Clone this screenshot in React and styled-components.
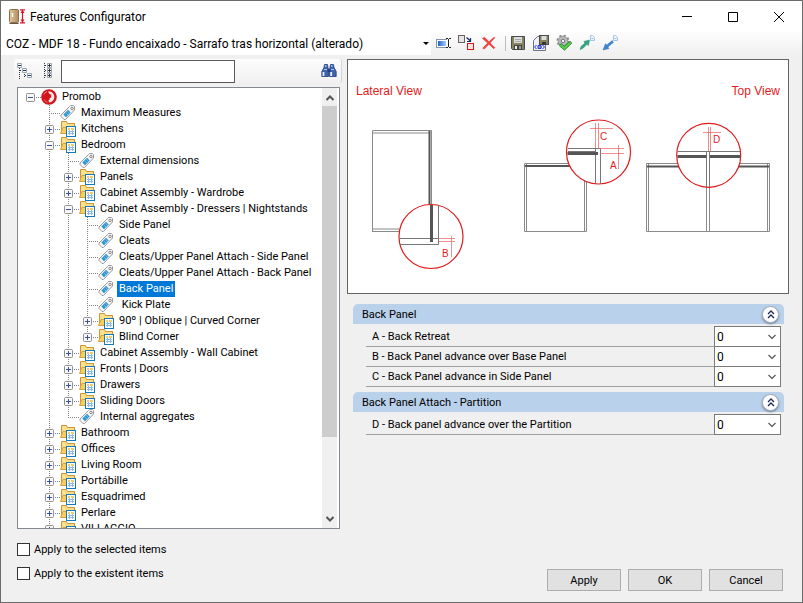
import React, { useState } from "react";
import styled, { createGlobalStyle, css } from "styled-components";

const GlobalStyle = createGlobalStyle`
  * {
    box-sizing: border-box;
  }
  body {
    margin: 0;
    background: #f0f0f0;
    color: #000;
    font-family: Roboto, "Liberation Sans", Arial, sans-serif;
    font-size: 11px;
  }
  button, input, select {
    font-family: inherit;
    font-size: inherit;
    color: inherit;
  }
  svg {
    display: block;
  }
`;

const Window = styled.div`
  display: flex;
  flex-direction: column;
  height: 100vh;
  min-height: 480px;
  border: 1px solid #6b6b6b;
  background: #f0f0f0;
`;

const TitleBar = styled.header`
  display: flex;
  align-items: center;
  height: 31px;
  padding-left: 8px;
  background: #fff;
`;

const Title = styled.h1`
  flex: 1;
  margin: 0 0 0 4px;
  font-size: 12px;
  font-weight: 400;
  line-height: 16px;
`;

const CaptionButton = styled.button`
  display: flex;
  align-items: center;
  justify-content: center;
  width: 46px;
  height: 29px;
  padding: 0;
  border: 0;
  background: none;
`;

const ToolBar = styled.div`
  display: flex;
  align-items: center;
  height: 23px;
  background: linear-gradient(#fdfdfd, #f0f0f0);
`;

const ModelCombo = styled.button`
  display: flex;
  align-items: center;
  flex: 0 0 430px;
  height: 23px;
  padding: 0 2px 0 5px;
  border: 0;
  background: #fff;
  font-size: 12px;
  text-align: left;
  white-space: nowrap;

  span {
    flex: 1;
  }
`;

const ToolButton = styled.button`
  width: 23px;
  height: 22px;
  padding: 0 0 1px 4px;
  border: 0;
  background: none;
`;

const Separator = styled.i`
  width: 1px;
  height: 15px;
  margin: 0 0 0 5px;
  background: #bdbdbd;
`;

const Main = styled.main`
  display: flex;
  flex: 1;
  gap: 5px;
  min-height: 0;
  padding: 4px 13px 0 13px;
`;

const Side = styled.section`
  display: flex;
  flex-direction: column;
  flex: 0 0 328px;
`;

const SearchBar = styled.div`
  display: flex;
  align-items: center;
  gap: 8px;
  height: 24px;
  padding: 0 4px 0 3px;
  border-right: 1px solid #d4d4d4;
  border-radius: 3px;
  background: linear-gradient(#fcfcfc, #f1f1f1);
`;

const SearchInput = styled.input`
  width: 174px;
  height: 23px;
  margin-right: auto;
  padding: 0 4px;
  border: 1px solid #5a5a5a;
  background: #fff;
`;

const IconButton = styled.button`
  padding: 0;
  border: 0;
  background: none;
`;

const TreeBox = styled.div`
  display: flex;
  flex: 1;
  min-height: 0;
  margin: 4px 2px 0 3px;
  border: 1px solid #828790;
  background: #fff;
`;

const TreeList = styled.ul`
  flex: 1;
  margin: 0;
  padding: 1px 0 0 3px;
  overflow: hidden;
  list-style: none;
`;

const TreeRow = styled.li`
  display: flex;
  align-items: center;
  height: 16px;
  white-space: pre;
`;

const dotsDown = "repeating-linear-gradient(#808080 0 1px, transparent 1px 2px)";
const dotsRight = "repeating-linear-gradient(90deg, #808080 0 1px, transparent 1px 2px)";

const Guide = styled.span`
  flex: none;
  width: 19px;
  height: 16px;
  ${({ $line }) =>
    $line &&
    css`
      background: ${dotsDown} 9px 0 / 1px 16px no-repeat;
    `}
`;

const Joint = styled.span`
  display: flex;
  flex: none;
  align-items: center;
  width: 20px;
  height: 16px;
  padding-left: 5px;
  background:
    ${dotsRight} 9px 8px / 11px 1px no-repeat,
    ${dotsDown} 9px 0 / 1px ${({ $down }) => $down}px no-repeat;
`;

const Expander = styled.button`
  width: 9px;
  height: 9px;
  padding: 0;
  border: 0;
  background: none;
`;

const ItemLabel = styled.button`
  height: 16px;
  margin-left: 3px;
  padding: 0 2px;
  border: 0;
  background: ${({ $selected }) => ($selected ? "#0078d7" : "none")};
  color: ${({ $selected }) => ($selected ? "#fff" : "#000")};
  line-height: 16px;
  white-space: pre;
`;

const ScrollBar = styled.div`
  display: flex;
  flex-direction: column;
  width: 17px;
  padding: 1px 2px 1px 0;
  background: linear-gradient(90deg, #f0f0f0 15px, #fff 15px);
`;

const ScrollArrow = styled.button`
  display: flex;
  align-items: center;
  justify-content: center;
  height: 17px;
  padding: 0;
  border: 0;
  background: none;
`;

const ScrollTrack = styled.div`
  flex: 1;

  div {
    height: 82%;
    background: #cdcdcd;
  }
`;

const Details = styled.section`
  flex: 1;
  min-width: 0;
`;

const Preview = styled.figure`
  margin: 0;
  border: 1px solid #646464;
  background: #fff;
  font-family: "Liberation Sans", Arial, sans-serif;
`;

const PreviewTitles = styled.figcaption`
  display: flex;
  justify-content: space-between;
  padding: 24px 8px 0;
  color: #e31b1b;
  font-size: 12px;
  line-height: 14px;
`;

const Groups = styled.div`
  display: flex;
  flex-direction: column;
  gap: 5px;
  padding: 10px 5px 0 6px;
`;

const GroupHeader = styled.h2`
  display: flex;
  align-items: center;
  justify-content: space-between;
  height: 20px;
  margin: 0 0 3px;
  padding: 0 5px 0 9px;
  border-radius: 5px 5px 0 0;
  background: #b9d1ea;
  font-size: 11px;
  font-weight: 400;
`;

const CollapseButton = styled.button`
  display: flex;
  align-items: center;
  justify-content: center;
  width: 17px;
  height: 17px;
  padding: 0;
  border: 1px solid #a3adbf;
  border-radius: 50%;
  background: #fff;
  box-shadow: 0 1px 2px #6f7b90;
`;

const Field = styled.div`
  display: flex;
  align-items: center;
  height: 21px;
  margin: -1px 3px 0 13px;
  border-bottom: 1px solid #a0a0a0;

  label {
    flex: 1;
    padding-left: 6px;
  }
`;

const SelectBox = styled.span`
  display: grid;
  align-items: center;
  width: 67px;
  height: 21px;
  margin-bottom: -1px;

  select {
    grid-area: 1 / 1;
    height: 21px;
    padding: 0 2px;
    appearance: none;
    border: 1px solid #7a7a7a;
    border-radius: 0;
    background: #fff;
    font-size: 12px;
  }
  svg {
    grid-area: 1 / 1;
    justify-self: end;
    margin-right: 4px;
    pointer-events: none;
  }
`;

const Footer = styled.footer`
  display: flex;
  align-items: flex-end;
  justify-content: space-between;
  padding: 8px 19px 11px 16px;
`;

const Checks = styled.div`
  margin-bottom: 6px;
`;

const Check = styled.label`
  display: flex;
  align-items: center;
  gap: 4px;
  height: 24px;

  input {
    width: 13px;
    height: 13px;
    margin: 0;
    appearance: none;
    border: 1px solid #333;
    background: #fff;
  }
  input:checked {
    box-shadow: inset 0 0 0 2px #fff;
    background: #333;
  }
`;

const Actions = styled.div`
  display: flex;
  gap: 7px;
`;

const ActionButton = styled.button`
  width: 74px;
  height: 22px;
  padding: 0;
  border: 1px solid #adadad;
  background: #e1e1e1;
`;

/* icons */

const AppIcon = () => (
  <svg width="17" height="16" viewBox="0 0 17 16">
    <defs>
      <linearGradient id="door" x2="1">
        <stop offset="0" stopColor="#e3c8a2" />
        <stop offset="1" stopColor="#b08c60" />
      </linearGradient>
    </defs>
    <rect x=".5" y=".5" width="9" height="13" rx="1" fill="url(#door)" stroke="#8d6e4b" />
    <path d="M.5 14.5h9" stroke="#6b5643" />
    <path d="M3.5 4v4" stroke="#fff" strokeWidth="1.4" />
    <path d="M11 .8h5M11 13.8h5M13.5 1.5v12" stroke="#d8122c" strokeWidth="1.2" />
    <path d="M13.5 1l2 3h-4zM13.5 13.5l2-3h-4z" fill="#d8122c" />
  </svg>
);

const CollapseTreeIcon = () => (
  <svg width="16" height="16" viewBox="0 0 16 16" fill="none">
    <path d="M2.5 5v11M7.5 9v6M3 7.5h3M8 12.5h3" stroke="#333" strokeDasharray="1 1" />
    <path d="M.5.5h4v4h-4zM5.5 5.5h4v4h-4zM10.5 10.5h4v4h-4z" fill="#fff" stroke="#9aa5b1" />
    <path d="M1 2.5h3M6 7.5h3M11 12.5h3" stroke="#1d3a5f" />
  </svg>
);

const ExpandTreeIcon = () => (
  <svg width="12" height="16" viewBox="0 0 12 16" fill="none">
    <path d="M3.500 0v16M4 2.5h3M4 7.5h3M4 12.5h3" stroke="#333" strokeDasharray="1 1" />
    <path d="M6.500.5h4v4h-4zM6.500 5.5h4v4h-4zM6.500 10.5h4v4h-4z" fill="#fff" stroke="#9aa5b1" />
    <path d="M7 2.5h3M7 7.5h3M7 12.5h3M8.5 1v3M8.5 6v3M8.5 11v3" stroke="#333" />
  </svg>
);

const BinocularsIcon = () => (
  <svg width="16" height="16" viewBox="0 0 16 16">
    <path d="M3.5 1.500h3l.5 3 .5 2v7H.8V8.500L3 4.500zM9.500 1.500h3l.5 3 2.200 4v5H8.500v-7l.5-2z" fill="#3d63a8" stroke="#1f3f80" strokeWidth=".8" />
    <path d="M6.500 6h3v3h-3z" fill="#1f3f80" />
    <path d="M2.500 9v4M10.200 9v4" stroke="#eaf2ff" strokeWidth="1.800" />
    <path d="M4.800 2.200v1.600M10.800 2.200v1.600" stroke="#dbe8fb" strokeWidth="1.200" />
    <path d="M3 6.500h3M10 6.500h3" stroke="#a9c3ea" />
  </svg>
);

const RenameIcon = () => (
  <svg width="16" height="16" viewBox="0 0 16 16" fill="none">
    <defs>
      <linearGradient id="field" x2="1">
        <stop offset="0" stopColor="#1f62cc" />
        <stop offset="1" stopColor="#a9cdf8" />
      </linearGradient>
    </defs>
    <rect x="1.500" y="4.500" width="11" height="8" fill="#fff" stroke="#8794a8" />
    <rect x="3" y="6" width="8" height="5" fill="url(#field)" />
    <path d="M13.500 3v10" stroke="#fff" strokeWidth="3" />
    <path d="M11 3.500h2M14 3.500h2M13.500 4v8M11 12.500h2M14 12.500h2" stroke="#222" />
  </svg>
);

const ReplaceIcon = () => (
  <svg width="17" height="16" viewBox="0 0 17 16" fill="none">
    <rect x=".5" y=".5" width="6" height="7" fill="#e5e5e5" stroke="#6d5f5f" />
    <path d="M8.5 2.500l4 3.500M12.500 3v3.500H9" stroke="#152a66" strokeWidth="1.200" />
    <rect x="9.500" y="8.500" width="6" height="6" fill="#f3e4e4" stroke="#e01313" />
  </svg>
);

const DeleteIcon = () => (
  <svg width="16" height="16" viewBox="0 0 16 16">
    <path d="M1.500 3.500L3.500 2.200 8 6.800l5-4.600.8.600L9 8l4.800 4.700-1 1L8 9.200 3.200 14l-1.500-.8L6.700 8z" fill="#f0443c" stroke="#e02020" strokeWidth=".5" />
  </svg>
);

const SaveIcon = () => (
  <svg width="16" height="16" viewBox="0 0 16 16">
    <path d="M1.500 1.500h13v13h-12l-1-1z" fill="#85825f" stroke="#4a4a4a" />
    <rect x="4" y="2" width="8" height="6" fill="#dcdcdc" />
    <path d="M5 4.500h6M5 6.500h6" stroke="#aaa" />
    <rect x="4" y="10" width="8" height="5" fill="#444" />
    <rect x="5" y="11" width="2" height="3" fill="#eee" />
    <rect x="9" y="11" width="2" height="3" fill="#999" />
  </svg>
);

const SaveAsIcon = () => (
  <svg width="16" height="16" viewBox="0 0 16 16">
    <path d="M.5 5.500l4-4h8v14H.5z" fill="#eef0f5" stroke="#6d7280" />
    <rect x="6.500" y=".5" width="9" height="9" fill="#85825f" stroke="#4a4a4a" />
    <rect x="8.500" y="1" width="5" height="4" fill="#ddd" />
    <rect x="9" y="7" width="4" height="2.500" fill="#333" />
    <path d="M3.500 10l-2 2 2 2M9.500 10l2 2-2 2" fill="none" stroke="#1a2bd8" />
    <path d="M5 10.500h3v3H5zM5 12h4" fill="none" stroke="#1a2bd8" strokeWidth=".9" />
  </svg>
);

const GearCheckIcon = () => (
  <svg width="16" height="16" viewBox="0 0 16 16">
    <circle cx="7" cy="6" r="5.500" fill="none" stroke="#8b8b8b" strokeWidth="2" strokeDasharray="2.200 2.100" />
    <circle cx="7" cy="6" r="4.800" fill="#b8b8b8" stroke="#8b8b8b" strokeWidth=".8" />
    <circle cx="7" cy="6" r="1.700" fill="#f6f6f6" stroke="#777" />
    <path d="M3.200 10.500l2-1.800 3.100 2.600L14 6.300l1.800 1.700-7.300 7.200z" fill="#5ccc4d" stroke="#1d8a22" strokeWidth=".9" />
  </svg>
);

const MiniPage = () => (
  <path d="M11.500.5h2l2 2v3h-4zM12.500 3.500h2" fill="#edf5fd" stroke="#a5c4e6" />
);

const ImportIcon = () => (
  <svg width="16" height="16" viewBox="0 0 16 16">
    <path d="M1 14.500l1-3 4-3.500-1.200-1.500 5.700-1.500-1 5.500-1.500-1.200-4 4z" fill="#2fa584" stroke="#248a6d" strokeWidth=".5" />
    <MiniPage />
  </svg>
);

const ExportIcon = () => (
  <svg width="16" height="16" viewBox="0 0 16 16">
    <path d="M10.300 5.500l-5.500 4.500L3.500 8.800 1 15l6-1.500L5.800 12l5.500-4.500z" fill="#3f86d0" stroke="#2d6fb8" strokeWidth=".5" />
    <MiniPage />
  </svg>
);

const RootIcon = () => (
  <svg width="16" height="16" viewBox="0 0 16 16">
    <circle cx="8" cy="8" r="7.800" fill="#d3141d" />
    <path d="M7 2.500C10.500 1.800 13.500 4.500 13.300 8 13.200 11 11 13.300 8 13.500L7.500 11 9 10.500 8.500 9 10.500 8.500 9.800 6.500 11 6 8.500 5z" fill="#fbeaea" />
    <path d="M3 5.500C3.500 4 4.500 3 6 2.600" fill="none" stroke="#f3a3a6" strokeWidth=".9" />
    <path d="M3.200 10.500C4 12 5 12.900 6.500 13.300" fill="none" stroke="#f3a3a6" strokeWidth=".7" />
  </svg>
);

const FolderIcon = () => (
  <svg width="16" height="16" viewBox="0 0 16 16">
    <path d="M1.500 12.500V.5h5l1 2h7v10z" fill="#fbe08c" stroke="#cf9336" />
    <path d="M.5 12.500l2.500-6h3.500l1-1h7v7z" fill="#f9cf5c" stroke="#d9a040" />
    <rect x="6.500" y="5.500" width="9" height="10" fill="#fff" stroke="#1479b5" />
    <path d="M8 8h2M11 8h3" stroke="#eebc4a" strokeWidth="1.500" />
    <path d="M8 10.500h6M8 12.500h6M9.500 9v5M12.500 9v5" stroke="#8dbae0" />
  </svg>
);

const TagIcon = () => (
  <svg width="16" height="16" viewBox="0 0 16 16">
    <path d="M9.500 1.500l1-1h3l1 1v3.500l-9 9.500h-1.500L1 11.500V10z" fill="#f5f5f5" stroke="#9a9a9a" />
    <path d="M8 4.800l2.700 2.700-4.700 4.700-2.700-2.700z" fill="#2f96d6" />
    <path d="M7 6l2.700 2.700M5.500 7.500l2.700 2.700" stroke="#9cd0f0" strokeWidth=".6" />
    <circle cx="12" cy="3.500" r="1.200" fill="#fff" stroke="#777" strokeWidth=".9" />
  </svg>
);

const ExpanderIcon = ({ open }) => (
  <svg width="9" height="9" viewBox="0 0 9 9">
    <rect x=".5" y=".5" width="8" height="8" rx="1" fill="#f8f8f8" stroke="#919191" />
    <path d={open ? "M2 4.500h5" : "M2 4.500h5M4.500 2v5"} stroke="#3a4fa0" />
  </svg>
);

const Chevron = ({ up, bold }) => (
  <svg width="10" height="6" viewBox="0 0 10 6">
    <path
      d={up ? "M1.500 5L5 1.500 8.500 5" : "M1.500 1L5 4.500 8.500 1"}
      fill="none"
      stroke="#555"
      strokeWidth={bold ? 2 : 1.2}
    />
  </svg>
);

/* cabinet drawing with its magnified joints */

const CabinetDrawing = () => (
  <svg viewBox="348 98 440 195" width="100%" fontSize="10" fill="none" role="img" aria-label="Back panel joints">
    <g stroke="#8a8a8a">
      <path d="M372.500 231.500v-101h59v76" />
      <path d="M373 133h56M373 229h40" stroke="#c4c4c4" strokeWidth="2" />
      <path d="M372 231.500h40" />
      <path d="M524.500 163.500h62v68h-62zM526.500 163v68M584.500 163v68" />
      <path d="M646.500 163.500h123v68h-123zM648.500 163v68M767.500 163v68M706.500 163v68M709.500 163v68" />
    </g>
    <path d="M429.500 131v80M525 166h60M647 166.500h122" stroke="#555" strokeWidth="2" />

    <g fill="#fff" stroke="#e01b1b" strokeWidth="1.200">
      <circle cx="431" cy="236.500" r="32" />
      <circle cx="598.500" cy="152" r="32" />
      <circle cx="708.700" cy="155.300" r="32" />
    </g>

    <g stroke="#777">
      <path d="M399.500 238.500h39M400 244.500h38.500v-39" />
      <path d="M568 148.500h32.500v35M568 151.500h27M595.500 148v35.500" />
      <path d="M677.500 151.500h62.500M706.500 152v35M709.500 152v35" />
    </g>
    <g stroke="#555" strokeWidth="3">
      <path d="M431.500 205v37M567.500 153.500h30.500M677.500 156.500h29M710 156.500h30.500" />
    </g>

    <g stroke="#e86060" strokeWidth=".7">
      <path d="M439 238.500h16M439 241.500h16M451.500 236v21" />
      <path d="M595.500 123v25M598.500 123v25M590 128.500h23M600 148.500h24M600 153.500h24M618.500 145v24" />
      <path d="M708.500 127v24M710.500 127v24M703 132.500h18" />
    </g>
    <g fill="#e31b1b">
      <text x="442" y="257">B</text>
      <text x="600" y="140">C</text>
      <text x="610" y="169">A</text>
      <text x="713" y="143">D</text>
    </g>
  </svg>
);

// level, label, kind, open, last child of its parent
const items = [
  { level: 0, label: "Promob", kind: "root", open: true, last: true },
  { level: 1, label: "Maximum Measures", kind: "tag" },
  { level: 1, label: "Kitchens", kind: "folder" },
  { level: 1, label: "Bedroom", kind: "folder", open: true },
  { level: 2, label: "External dimensions", kind: "tag" },
  { level: 2, label: "Panels", kind: "folder" },
  { level: 2, label: "Cabinet Assembly - Wardrobe", kind: "folder" },
  { level: 2, label: "Cabinet Assembly - Dressers | Nightstands", kind: "folder", open: true },
  { level: 3, label: "Side Panel", kind: "tag" },
  { level: 3, label: "Cleats", kind: "tag" },
  { level: 3, label: "Cleats/Upper Panel Attach - Side Panel", kind: "tag" },
  { level: 3, label: "Cleats/Upper Panel Attach - Back Panel", kind: "tag" },
  { level: 3, label: "Back Panel", kind: "tag" },
  { level: 3, label: " Kick Plate", kind: "tag" },
  { level: 3, label: "90º | Oblique | Curved Corner", kind: "folder" },
  { level: 3, label: "Blind Corner", kind: "folder", last: true },
  { level: 2, label: "Cabinet Assembly - Wall Cabinet", kind: "folder" },
  { level: 2, label: "Fronts | Doors", kind: "folder" },
  { level: 2, label: "Drawers", kind: "folder" },
  { level: 2, label: "Sliding Doors", kind: "folder" },
  { level: 2, label: "Internal aggregates", kind: "tag", last: true },
  { level: 1, label: "Bathroom", kind: "folder" },
  { level: 1, label: "Offices", kind: "folder" },
  { level: 1, label: "Living Room", kind: "folder" },
  { level: 1, label: "Portábille", kind: "folder" },
  { level: 1, label: "Esquadrimed", kind: "folder" },
  { level: 1, label: "Perlare", kind: "folder" },
  { level: 1, label: "VILLAGGIO", kind: "folder" },
];

const groups = [
  {
    title: "Back Panel",
    fields: ["A - Back Retreat", "B - Back Panel advance over Base Panel", "C - Back Panel advance in Side Panel"],
  },
  {
    title: "Back Panel Attach - Partition",
    fields: ["D - Back panel advance over the Partition"],
  },
];

const kindIcons = { root: RootIcon, tag: TagIcon, folder: FolderIcon };

const TreeItem = ({ item, selected, onSelect }) => {
  const Icon = kindIcons[item.kind];
  const down = item.level === 0 ? 0 : item.last ? 9 : 16;
  return (
    <TreeRow>
      {Array.from({ length: item.level }, (_, i) => (
        <Guide key={i} $line={i > 0} />
      ))}
      <Joint $down={down}>
        {item.kind !== "tag" && (
          <Expander aria-label={"Toggle " + item.label}>
            <ExpanderIcon open={item.open} />
          </Expander>
        )}
      </Joint>
      <Icon />
      <ItemLabel $selected={selected} onClick={onSelect}>
        {item.label}
      </ItemLabel>
    </TreeRow>
  );
};

const FieldGroup = ({ title, fields }) => (
  <section>
    <GroupHeader>
      {title}
      <CollapseButton aria-label={"Collapse " + title}>
        <svg width="8" height="9" viewBox="0 0 8 9" fill="none" stroke="#1c2f5c" strokeWidth="1.400">
          <path d="M1 4l3-3 3 3M1 8l3-3 3 3" />
        </svg>
      </CollapseButton>
    </GroupHeader>
    {fields.map((field) => (
      <Field key={field}>
        <label htmlFor={"field-" + field[0]}>{field}</label>
        <SelectBox>
          <select id={"field-" + field[0]} defaultValue="0">
            <option>0</option>
          </select>
          <Chevron />
        </SelectBox>
      </Field>
    ))}
  </section>
);

const App = () => {
  const [selected, setSelected] = useState("Back Panel");

  return (
    <>
      <GlobalStyle />
      <Window>
        <TitleBar>
          <AppIcon />
          <Title>Features Configurator</Title>
          <CaptionButton aria-label="Minimize">
            <svg width="10" height="10" stroke="#000"><path d="M0 4.500h10" /></svg>
          </CaptionButton>
          <CaptionButton aria-label="Maximize">
            <svg width="10" height="10" stroke="#000" fill="none"><path d="M.5.5h9v9h-9z" /></svg>
          </CaptionButton>
          <CaptionButton aria-label="Close">
            <svg width="10" height="10" stroke="#000"><path d="M0 0l10 10M10 0L0 10" /></svg>
          </CaptionButton>
        </TitleBar>

        <ToolBar>
          <ModelCombo>
            <span>COZ - MDF 18 - Fundo encaixado - Sarrafo tras horizontal (alterado)</span>
            <svg width="6" height="3"><path d="M0 0h6L3 3z" /></svg>
          </ModelCombo>
          <ToolButton aria-label="Rename"><RenameIcon /></ToolButton>
          <ToolButton aria-label="Replace"><ReplaceIcon /></ToolButton>
          <ToolButton aria-label="Delete"><DeleteIcon /></ToolButton>
          <Separator />
          <ToolButton aria-label="Save"><SaveIcon /></ToolButton>
          <ToolButton aria-label="Save as"><SaveAsIcon /></ToolButton>
          <ToolButton aria-label="Validate"><GearCheckIcon /></ToolButton>
          <ToolButton aria-label="Import"><ImportIcon /></ToolButton>
          <ToolButton aria-label="Export"><ExportIcon /></ToolButton>
        </ToolBar>

        <Main>
          <Side>
            <SearchBar>
              <IconButton aria-label="Collapse all"><CollapseTreeIcon /></IconButton>
              <IconButton aria-label="Expand all"><ExpandTreeIcon /></IconButton>
              <SearchInput aria-label="Search" />
              <IconButton aria-label="Find"><BinocularsIcon /></IconButton>
            </SearchBar>
            <TreeBox>
              <TreeList>
                {items.map((item) => (
                  <TreeItem
                    key={item.label}
                    item={item}
                    selected={item.label === selected}
                    onSelect={() => setSelected(item.label)}
                  />
                ))}
              </TreeList>
              <ScrollBar>
                <ScrollArrow aria-label="Scroll up"><Chevron up bold /></ScrollArrow>
                <ScrollTrack><div /></ScrollTrack>
                <ScrollArrow aria-label="Scroll down"><Chevron bold /></ScrollArrow>
              </ScrollBar>
            </TreeBox>
          </Side>

          <Details>
            <Preview>
              <PreviewTitles>
                <span>Lateral View</span>
                <span>Top View</span>
              </PreviewTitles>
              <CabinetDrawing />
            </Preview>
            <Groups>
              {groups.map((group) => (
                <FieldGroup key={group.title} {...group} />
              ))}
            </Groups>
          </Details>
        </Main>

        <Footer>
          <Checks>
            <Check><input type="checkbox" />Apply to the selected items</Check>
            <Check><input type="checkbox" />Apply to the existent items</Check>
          </Checks>
          <Actions>
            <ActionButton>Apply</ActionButton>
            <ActionButton>OK</ActionButton>
            <ActionButton>Cancel</ActionButton>
          </Actions>
        </Footer>
      </Window>
    </>
  );
};

export default App;
